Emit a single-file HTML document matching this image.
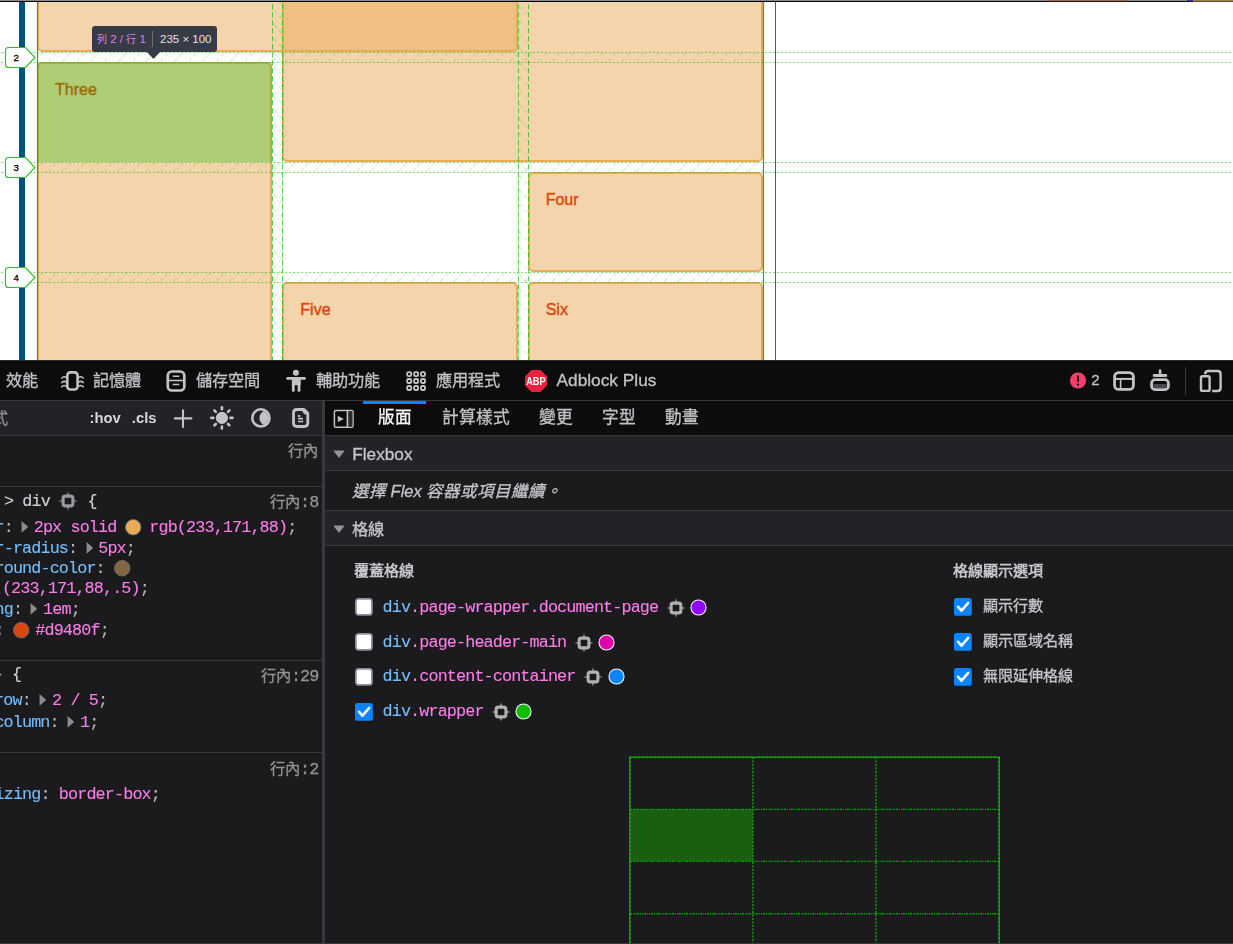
<!DOCTYPE html>
<html lang="zh-TW"><head><meta charset="utf-8">
<style>
*{box-sizing:border-box;margin:0;padding:0}
html,body{width:1233px;height:944px;overflow:hidden;background:#fff;font-family:"Liberation Sans",sans-serif}
.a{position:absolute}
#page{position:absolute;left:0;top:0;width:1233px;height:360px;background:#fff;overflow:hidden}
.box{position:absolute;background:rgba(233,171,88,.5);border:2px solid rgb(233,171,88);border-radius:5px;color:#d9480f;font-size:16px;padding:16px;line-height:20px;-webkit-text-stroke:0.45px currentColor}
.lbl{position:absolute;left:5px;width:30px;height:21px}
.lbl span{position:absolute;left:0;width:22px;top:3px;font-size:10.5px;text-align:center;color:#000;line-height:14px}
#dev{position:absolute;left:0;top:0;width:1233px;height:944px;will-change:transform}
.cjk{font-size:16px}
.mono{font-family:"Liberation Mono",monospace}
.t.mono{-webkit-text-stroke:0.1px currentColor}
.t{position:absolute;white-space:pre;line-height:20px;-webkit-text-stroke:0.3px currentColor}
</style></head><body>
<div id="page">
  <!-- blue bars -->
  <div class="a" style="left:19px;top:2px;width:6px;height:358px;background:#005282"></div>
  <div class="a" style="left:775px;top:2px;width:1px;height:358px;background:#0a70b8"></div>
  <!-- boxes -->
  <div class="box" style="left:37px;top:-48px;width:480.67px;height:100px"></div>
  <div class="box" style="left:282.33px;top:-48px;width:480.67px;height:210px"></div>
  <div class="box" style="left:37px;top:62px;width:235.33px;height:320px">Three</div>
  <div class="box" style="left:527.67px;top:172px;width:235.33px;height:100px">Four</div>
  <div class="box" style="left:282.33px;top:282px;width:235.34px;height:100px">Five</div>
  <div class="box" style="left:527.67px;top:282px;width:235.33px;height:100px">Six</div>
  <!-- highlighted cell -->
  <div class="a" style="left:37px;top:62px;width:235px;height:100px;background:rgba(18,188,0,.3)"></div>
  <!-- grid overlay svg -->
  <svg class="a" style="left:0;top:0" width="1233" height="360">
    <defs>
      <pattern id="hh" x="5.5" y="52" width="14" height="10" patternUnits="userSpaceOnUse">
        <path d="M0,10 L10,0" stroke="rgba(18,188,0,.2)" stroke-width="1.3" stroke-dasharray="5.5 2.5"/>
      </pattern>
      <pattern id="hv1" x="272.33" y="9.2" width="10" height="14.14" patternUnits="userSpaceOnUse">
        <path d="M0.5,0.5 L10,10" stroke="rgba(18,188,0,.2)" stroke-width="1.3" stroke-dasharray="6 2.5"/>
      </pattern>
      <pattern id="hv2" x="517.67" y="4.6" width="10" height="14.14" patternUnits="userSpaceOnUse">
        <path d="M0.5,0.5 L10,10" stroke="rgba(18,188,0,.2)" stroke-width="1.3" stroke-dasharray="6 2.5"/>
      </pattern>
    </defs>
    <rect x="37" y="52" width="726" height="10" fill="url(#hh)"/>
    <rect x="37" y="162" width="726" height="10" fill="url(#hh)"/>
    <rect x="37" y="272" width="726" height="10" fill="url(#hh)"/>
    <rect x="272.33" y="2" width="10" height="358" fill="url(#hv1)"/>
    <rect x="517.67" y="2" width="10" height="358" fill="url(#hv2)"/>
    <g stroke="rgba(18,188,0,.47)" stroke-width="1" stroke-dasharray="2.4 1.6" fill="none">
      <path d="M1,52.5H1233M1,62.5H1233M1,162.5H1233M1,172.5H1233M1,272.5H1233M1,282.5H1233"/>
    </g>
    <g stroke="rgba(18,188,0,.72)" stroke-width="1" stroke-dasharray="5 3" fill="none">
      <path d="M272.5,-3.7V360M282.5,-3.7V360M518.5,-3.7V360M528.5,-3.7V360"/>
    </g>
    <g stroke="#12bc00" stroke-width="1.2" fill="none">
      <path d="M37.5,2V360M763.5,2V360"/>
    </g>
    <!-- labels -->
    <g fill="#fff" stroke="#2fc22f" stroke-width="1.2">
      <path d="M8.5,47.5 H25.5 L35,57.5 L25.5,67.5 H8.5 Q5.5,67.5 5.5,64.5 V50.5 Q5.5,47.5 8.5,47.5Z"/>
      <path d="M8.5,157.5 H25.5 L35,167.5 L25.5,177.5 H8.5 Q5.5,177.5 5.5,174.5 V160.5 Q5.5,157.5 8.5,157.5Z"/>
      <path d="M8.5,267.5 H25.5 L35,277.5 L25.5,287.5 H8.5 Q5.5,287.5 5.5,284.5 V270.5 Q5.5,267.5 8.5,267.5Z"/>
    </g>
    <g font-family="Liberation Sans" font-size="9.6" fill="#000" stroke="#000" stroke-width="0.3" text-anchor="middle">
      <text x="16.2" y="60.7">2</text>
      <text x="16.2" y="170.7">3</text>
      <text x="16.2" y="280.7">4</text>
    </g>
  </svg>
  <!-- tooltip -->
  <div class="a" style="left:92px;top:26px;width:125px;height:26px;background:#363b45;border-radius:3px"></div>
  <svg class="a" style="left:146px;top:51px" width="15" height="10"><path d="M0,0 L15,0 L7.5,8Z" fill="#363b45"/></svg>
  <div class="a" style="left:97px;top:31px;font-size:11.5px;line-height:16px;color:#df80ee;white-space:pre"><span style="font-size:10px">列</span> 2 / <span style="font-size:10px">行</span> 1</div>
  <div class="a" style="left:152px;top:31px;width:1px;height:16px;background:#6a6f78"></div>
  <div class="a" style="left:160px;top:31px;font-size:11.5px;line-height:16px;color:#e4e4e8;white-space:pre">235 × 100</div>
  <!-- top strip -->
  <div class="a" style="left:0;top:0;width:1233px;height:1px;background:#8a8a8a"></div>
  <div class="a" style="left:0;top:1px;width:1233px;height:1px;background:#050505"></div>
  <div class="a" style="left:1047px;top:0;width:81px;height:1px;background:#8c7060"></div>
  <div class="a" style="left:1047px;top:1px;width:81px;height:1px;background:#3a0c08"></div>
  <div class="a" style="left:1187px;top:0;width:6px;height:1px;background:#3a3a90"></div>
  <div class="a" style="left:1187px;top:1px;width:6px;height:1px;background:#101060"></div>
  <div class="a" style="left:1193px;top:0;width:40px;height:1px;background:#9a8050"></div>
  <div class="a" style="left:1193px;top:1px;width:40px;height:1px;background:#6a5020"></div>
</div>

<div id="dev">
<div class="a" style="left:0px;top:360px;width:1233px;height:584px;background:#1b1b1e;"></div>
<div class="a" style="left:0px;top:360px;width:1233px;height:40px;background:#0c0c0d;"></div>
<div class="a" style="left:0px;top:400px;width:1233px;height:1px;background:#38383d;"></div>
<div class="a" style="left:0px;top:360px;width:1233px;height:1px;background:#2a2a2e;"></div>
<div class="t" style="left:5.5px;top:369.8px;font-size:16.2px;line-height:20.25px;color:#c2c2c6;">效能</div>
<div class="t" style="left:92.5px;top:369.8px;font-size:16.2px;line-height:20.25px;color:#c2c2c6;">記憶體</div>
<div class="t" style="left:195.5px;top:369.8px;font-size:16.2px;line-height:20.25px;color:#c2c2c6;">儲存空間</div>
<div class="t" style="left:315.5px;top:369.8px;font-size:16.2px;line-height:20.25px;color:#c2c2c6;">輔助功能</div>
<div class="t" style="left:435.5px;top:369.8px;font-size:16.2px;line-height:20.25px;color:#c2c2c6;">應用程式</div>
<div class="t" style="left:556.5px;top:370px;font-size:17.3px;line-height:21.62px;color:#c2c2c6;line-height:20px">Adblock Plus</div>
<div class="t" style="left:1091.3px;top:371.3px;font-size:15px;line-height:18.75px;color:#c2c2c6;">2</div>
<svg class="a" style="left:56px;top:366px" width="34" height="30" viewBox="0 0 34 30"><g fill="none" stroke="#c3c3c6" stroke-width="2.6" stroke-linecap="round"><rect x="11.3" y="6.4" width="10.3" height="17.1" rx="3"/></g><g fill="none" stroke="#c3c3c6" stroke-width="1.6" stroke-linecap="round"><path d="M9.8,11.2 Q7.5,10.0 5.8,12.0"/><path d="M23.2,11.2 Q25.5,10.0 27.2,12.0"/><path d="M9.8,15.8 Q7.5,14.600000000000001 5.8,16.6"/><path d="M23.2,15.8 Q25.5,14.600000000000001 27.2,16.6"/><path d="M9.8,20.0 Q7.5,18.8 5.8,20.8"/><path d="M23.2,20.0 Q25.5,18.8 27.2,20.8"/></g></svg>
<svg class="a" style="left:160px;top:366px" width="34" height="30" viewBox="0 0 34 30"><g fill="none" stroke="#c3c3c6"><rect x="7.8" y="5.5" width="16.5" height="19" rx="4" stroke-width="2.7"/><path d="M9,14.5H23" stroke-width="1.6"/><path d="M13.3,10.2H18.7M13.3,18.4H18.7" stroke-width="1.5" stroke-linecap="round"/></g></svg>
<svg class="a" style="left:280px;top:366px" width="34" height="30" viewBox="0 0 34 30"><g fill="#c3c3c6"><circle cx="15.9" cy="6.8" r="3"/><rect x="6.2" y="11" width="19.7" height="2.8" rx="1.4"/><rect x="11.8" y="12" width="8.9" height="7.2"/><rect x="11.9" y="17" width="2.8" height="9" rx="1.4"/><rect x="17.6" y="17" width="2.8" height="9" rx="1.4"/></g></svg>
<svg class="a" style="left:400px;top:366px" width="34" height="30" viewBox="0 0 34 30"><rect x="7.2" y="6.1" width="4" height="4" rx="1.3" fill="none" stroke="#c3c3c6" stroke-width="1.9"/><rect x="7.2" y="13.0" width="4" height="4" rx="1.3" fill="none" stroke="#c3c3c6" stroke-width="1.9"/><rect x="7.2" y="20.0" width="4" height="4" rx="1.3" fill="none" stroke="#c3c3c6" stroke-width="1.9"/><rect x="14.1" y="6.1" width="4" height="4" rx="1.3" fill="none" stroke="#c3c3c6" stroke-width="1.9"/><rect x="14.1" y="13.0" width="4" height="4" rx="1.3" fill="none" stroke="#c3c3c6" stroke-width="1.9"/><rect x="14.1" y="20.0" width="4" height="4" rx="1.3" fill="none" stroke="#c3c3c6" stroke-width="1.9"/><rect x="21.0" y="6.1" width="4" height="4" rx="1.3" fill="none" stroke="#c3c3c6" stroke-width="1.9"/><rect x="21.0" y="13.0" width="4" height="4" rx="1.3" fill="none" stroke="#c3c3c6" stroke-width="1.9"/><rect x="21.0" y="20.0" width="4" height="4" rx="1.3" fill="none" stroke="#c3c3c6" stroke-width="1.9"/></svg>
<svg class="a" style="left:519px;top:366px" width="34" height="30" viewBox="0 0 34 30"><path d="M12.5,4H21.5L28,10.5V19.5L21.5,26H12.5L6,19.5V10.5Z" fill="#e8213f"/><text x="7.2" y="18.9" font-family="Liberation Sans" font-weight="bold" font-size="10.4" fill="#fff" textLength="19.4" lengthAdjust="spacingAndGlyphs">ABP</text></svg>
<svg class="a" style="left:1064px;top:366px" width="34" height="30" viewBox="0 0 34 30"><circle cx="14" cy="14.5" r="8.1" fill="#f63d6b"/><rect x="13" y="9.2" width="2" height="6.7" rx="1" fill="#0c0c0d"/><circle cx="14" cy="18.6" r="1.1" fill="#0c0c0d"/></svg>
<svg class="a" style="left:1107px;top:364px" width="34" height="34" viewBox="0 0 34 34"><g fill="none" stroke="#c3c3c6"><rect x="7.6" y="8.6" width="18.8" height="16.8" rx="4" stroke-width="2.8"/><path d="M9,14.9H25" stroke-width="2"/><path d="M13.6,15V24" stroke-width="1.6"/></g></svg>
<svg class="a" style="left:1143px;top:364px" width="34" height="34" viewBox="0 0 34 34"><g fill="none" stroke="#c3c3c6" stroke-linecap="round"><path d="M17.1,6.6V10.5" stroke-width="2.6"/><path d="M11.2,11.5H22.8" stroke-width="2.8"/><rect x="8.6" y="15.6" width="16.8" height="10" rx="3.6" stroke-width="2.8"/></g><rect x="10.2" y="20" width="13.6" height="4" fill="#4a4a4f"/></svg>
<div class="a" style="left:1185px;top:367px;width:1px;height:28px;background:#3a3a3e;"></div>
<svg class="a" style="left:1194px;top:364px" width="34" height="34" viewBox="0 0 34 34"><g fill="none" stroke="#c3c3c6" stroke-width="2.4"><rect x="7" y="12.2" width="8.6" height="14.7" rx="1.4"/><path d="M11.2,10.2V10 Q11.2,7 14.2,7H23.6Q26.6,7 26.6,10V24Q26.6,27 23.6,27H18.2"/></g></svg>
<div class="a" style="left:0px;top:401px;width:322px;height:34px;background:#232327;"></div>
<div class="a" style="left:0px;top:435px;width:322px;height:1px;background:#38383d;"></div>
<div class="a" style="left:322px;top:401px;width:3px;height:543px;background:#38383d;"></div>
<div class="t" style="left:-8.5px;top:407.5px;font-size:16.2px;line-height:20.25px;color:#8f8f93;">式</div>
<div class="t" style="left:89.5px;top:408.8px;font-size:14.8px;line-height:18.5px;color:#d7d7db;font-weight:bold;-webkit-text-stroke:0">:hov</div>
<div class="t" style="left:131.8px;top:408.8px;font-size:14.8px;line-height:18.5px;color:#d7d7db;font-weight:bold;-webkit-text-stroke:0">.cls</div>
<svg class="a" style="left:160px;top:401px" width="40" height="34" viewBox="0 0 40 34"><path d="M23,9.2V26M14.8,17.4H31.4" stroke="#c3c3c6" stroke-width="2.1" stroke-linecap="round"/></svg>
<svg class="a" style="left:205px;top:401px" width="34" height="34" viewBox="0 0 34 34"><circle cx="16.9" cy="16.9" r="5.6" fill="#c3c3c6" stroke="#d8dde2" stroke-width="0.8"/><path d="M25.50,16.90L27.50,16.90" stroke="#c3c3c6" stroke-width="2.6" stroke-linecap="round"/><path d="M22.98,22.98L24.40,24.40" stroke="#c3c3c6" stroke-width="2.6" stroke-linecap="round"/><path d="M16.90,25.50L16.90,27.50" stroke="#c3c3c6" stroke-width="2.6" stroke-linecap="round"/><path d="M10.82,22.98L9.40,24.40" stroke="#c3c3c6" stroke-width="2.6" stroke-linecap="round"/><path d="M8.30,16.90L6.30,16.90" stroke="#c3c3c6" stroke-width="2.6" stroke-linecap="round"/><path d="M10.82,10.82L9.40,9.40" stroke="#c3c3c6" stroke-width="2.6" stroke-linecap="round"/><path d="M16.90,8.30L16.90,6.30" stroke="#c3c3c6" stroke-width="2.6" stroke-linecap="round"/><path d="M22.98,10.82L24.40,9.40" stroke="#c3c3c6" stroke-width="2.6" stroke-linecap="round"/></svg>
<svg class="a" style="left:244px;top:401px" width="34" height="34" viewBox="0 0 34 34"><defs><clipPath id="cc"><circle cx="23.2" cy="16.9" r="7.8"/></clipPath></defs><circle cx="16.9" cy="16.9" r="8.6" fill="none" stroke="#c3c3c6" stroke-width="2.6"/><circle cx="16.9" cy="16.9" r="7.4" fill="#c3c3c6" clip-path="url(#cc)"/></svg>
<svg class="a" style="left:283px;top:401px" width="34" height="34" viewBox="0 0 34 34"><g fill="none" stroke="#c3c3c6" stroke-width="2.8" stroke-linejoin="round"><path d="M14,8.5H21L24.8,12.3V22Q24.8,25.5 21.3,25.5H14Q10.5,25.5 10.5,22V12Q10.5,8.5 14,8.5Z"/></g><path d="M20,10L23.2,13.2" stroke="#c3c3c6" stroke-width="2"/><rect x="15" y="14" width="2.3" height="1.9" fill="#c3c3c6"/><path d="M15,17.6H20M15,20.5H20.2" stroke="#c3c3c6" stroke-width="1.6"/></svg>
<div class="a" style="left:325px;top:401px;width:908px;height:34px;background:#0c0c0d;"></div>
<div class="a" style="left:325px;top:435px;width:908px;height:1px;background:#38383d;"></div>
<div class="a" style="left:363px;top:401px;width:63px;height:3px;background:#0a84ff;"></div>
<svg class="a" style="left:327px;top:401px" width="34" height="34" viewBox="0 0 34 34"><rect x="7.4" y="9.5" width="18.6" height="16.7" rx="1.3" fill="none" stroke="#c3c3c6" stroke-width="1.5"/><rect x="21" y="10.2" width="4.3" height="15.3" fill="#2c2c30"/><path d="M20.4,10V26" stroke="#c3c3c6" stroke-width="1.6"/><path d="M10.8,14.8L16.8,18L10.8,21.1Z" fill="#c3c3c6"/></svg>
<div class="t" style="left:377.5px;top:407.5px;font-size:16.7px;line-height:20.88px;color:#fbfbfe;">版面</div>
<div class="t" style="left:441.5px;top:407.5px;font-size:16.7px;line-height:20.88px;color:#c2c2c6;">計算樣式</div>
<div class="t" style="left:538.5px;top:407.5px;font-size:16.7px;line-height:20.88px;color:#c2c2c6;">變更</div>
<div class="t" style="left:602px;top:407.5px;font-size:16.7px;line-height:20.88px;color:#c2c2c6;">字型</div>
<div class="t" style="left:665px;top:407.5px;font-size:16.7px;line-height:20.88px;color:#c2c2c6;">動畫</div>
<div class="t" style="right:914.7px;top:441.11px;font-size:15.3px;line-height:19.12px;color:#939395;text-align:right">行內</div>
<div class="a" style="left:0px;top:486px;width:322px;height:1px;background:#38383d;"></div>
<div class="t" style="right:914.5px;top:492.11px;font-size:15.3px;line-height:19.12px;color:#939395;text-align:right">行內<span class="mono" style="font-size:16.8px;letter-spacing:-0.880px">:8</span></div>
<div class="t mono" style="left:3.90px;top:490.90px;font-size:16.8px;line-height:21.00px;letter-spacing:-0.880px;"><span style="color:#d2d2d6">&gt; div</span></div>
<svg class="a" style="left:57.800000000000004px;top:490.8px" width="20" height="20" viewBox="0 0 20 20"><rect x="5.12" y="5.12" width="9.76" height="9.76" rx="2.2" fill="none" stroke="#9a9a9e" stroke-width="3.05"/><path d="M10,0.3L11.1,5H8.9ZM10,19.7L11.1,15H8.9ZM0.3,10L5,8.9V11.1ZM19.7,10L15,8.9V11.1Z" fill="#9a9a9e"/></svg>
<div class="t mono" style="left:87.40px;top:490.90px;font-size:16.8px;line-height:21.00px;letter-spacing:-0.880px;"><span style="color:#d2d2d6">{</span></div>
<div class="t mono" style="left:-5.50px;top:516.90px;font-size:16.8px;line-height:21.00px;letter-spacing:-0.880px;"><span style="color:#75bfff">r</span><span style="color:#b9b9bd">:</span></div>
<svg class="a" style="left:20px;top:519.5px" width="10" height="14" viewBox="0 0 10 14"><path d="M1.6,1.8 Q1,1 1.8,1.3 L7.6,6.2 Q8.2,6.8 7.6,7.4 L1.8,12.5 Q1,12.9 1.6,12 Z" fill="#8c8c90"/></svg>
<div class="t mono" style="left:33.70px;top:516.90px;font-size:16.8px;line-height:21.00px;letter-spacing:-0.880px;"><span style="color:#ff7de9">2px solid</span></div>
<svg class="a" style="left:124.25px;top:518.05px" width="18.5" height="18.5" viewBox="0 0 18.5 18.5"><circle cx="9.25" cy="9.25" r="7.75" fill="rgb(233,171,88)" stroke="#6b6b70" stroke-width="1"/></svg>
<div class="t mono" style="left:149.30px;top:516.90px;font-size:16.8px;line-height:21.00px;letter-spacing:-0.880px;"><span style="color:#ff7de9">rgb(233,171,88)</span><span style="color:#b9b9bd">;</span></div>
<div class="t mono" style="left:-5.50px;top:538.30px;font-size:16.8px;line-height:21.00px;letter-spacing:-0.880px;"><span style="color:#75bfff">r-radius</span><span style="color:#b9b9bd">:</span></div>
<svg class="a" style="left:85.3px;top:540.9px" width="10" height="14" viewBox="0 0 10 14"><path d="M1.6,1.8 Q1,1 1.8,1.3 L7.6,6.2 Q8.2,6.8 7.6,7.4 L1.8,12.5 Q1,12.9 1.6,12 Z" fill="#8c8c90"/></svg>
<div class="t mono" style="left:98.20px;top:538.30px;font-size:16.8px;line-height:21.00px;letter-spacing:-0.880px;"><span style="color:#ff7de9">5px</span><span style="color:#b9b9bd">;</span></div>
<div class="t mono" style="left:-5.50px;top:558.40px;font-size:16.8px;line-height:21.00px;letter-spacing:-0.880px;"><span style="color:#75bfff">round-color</span><span style="color:#b9b9bd">:</span></div>
<svg class="a" style="left:113.05px;top:559.25px" width="18.5" height="18.5" viewBox="0 0 18.5 18.5"><circle cx="9.25" cy="9.25" r="7.75" fill="#866640" stroke="#6b6b70" stroke-width="1"/></svg>
<div class="t mono" style="left:1.90px;top:578.40px;font-size:16.8px;line-height:21.00px;letter-spacing:-0.880px;"><span style="color:#ff7de9">(233,171,88,.5)</span><span style="color:#b9b9bd">;</span></div>
<div class="t mono" style="left:-5.50px;top:599.10px;font-size:16.8px;line-height:21.00px;letter-spacing:-0.880px;"><span style="color:#75bfff">ng</span><span style="color:#b9b9bd">:</span></div>
<svg class="a" style="left:28.7px;top:601.7px" width="10" height="14" viewBox="0 0 10 14"><path d="M1.6,1.8 Q1,1 1.8,1.3 L7.6,6.2 Q8.2,6.8 7.6,7.4 L1.8,12.5 Q1,12.9 1.6,12 Z" fill="#8c8c90"/></svg>
<div class="t mono" style="left:43.10px;top:599.10px;font-size:16.8px;line-height:21.00px;letter-spacing:-0.880px;"><span style="color:#ff7de9">1em</span><span style="color:#b9b9bd">;</span></div>
<div class="t mono" style="left:-5.50px;top:619.90px;font-size:16.8px;line-height:21.00px;letter-spacing:-0.880px;"><span style="color:#b9b9bd">:</span></div>
<svg class="a" style="left:11.649999999999999px;top:620.55px" width="18.5" height="18.5" viewBox="0 0 18.5 18.5"><circle cx="9.25" cy="9.25" r="7.75" fill="#d9480f" stroke="#6b6b70" stroke-width="1"/></svg>
<div class="t mono" style="left:35.30px;top:619.90px;font-size:16.8px;line-height:21.00px;letter-spacing:-0.880px;"><span style="color:#ff7de9">#d9480f</span><span style="color:#b9b9bd">;</span></div>
<div class="a" style="left:0px;top:660px;width:322px;height:1px;background:#38383d;"></div>
<div class="t" style="right:914.5px;top:666.01px;font-size:15.3px;line-height:19.12px;color:#939395;text-align:right">行內<span class="mono" style="font-size:16.8px;letter-spacing:-0.880px">:29</span></div>
<div class="t mono" style="left:-6.30px;top:663.80px;font-size:16.8px;line-height:21.00px;letter-spacing:-0.880px;"><span style="color:#d2d2d6">- {</span></div>
<div class="t mono" style="left:-5.90px;top:690.20px;font-size:16.8px;line-height:21.00px;letter-spacing:-0.880px;"><span style="color:#75bfff">row</span><span style="color:#b9b9bd">:</span></div>
<svg class="a" style="left:38.2px;top:692.8px" width="10" height="14" viewBox="0 0 10 14"><path d="M1.6,1.8 Q1,1 1.8,1.3 L7.6,6.2 Q8.2,6.8 7.6,7.4 L1.8,12.5 Q1,12.9 1.6,12 Z" fill="#8c8c90"/></svg>
<div class="t mono" style="left:52.00px;top:690.20px;font-size:16.8px;line-height:21.00px;letter-spacing:-0.880px;"><span style="color:#ff7de9">2 / 5</span><span style="color:#b9b9bd">;</span></div>
<div class="t mono" style="left:-5.60px;top:712.00px;font-size:16.8px;line-height:21.00px;letter-spacing:-0.880px;"><span style="color:#75bfff">column</span><span style="color:#b9b9bd">:</span></div>
<svg class="a" style="left:65.8px;top:714.6px" width="10" height="14" viewBox="0 0 10 14"><path d="M1.6,1.8 Q1,1 1.8,1.3 L7.6,6.2 Q8.2,6.8 7.6,7.4 L1.8,12.5 Q1,12.9 1.6,12 Z" fill="#8c8c90"/></svg>
<div class="t mono" style="left:80.00px;top:712.00px;font-size:16.8px;line-height:21.00px;letter-spacing:-0.880px;"><span style="color:#ff7de9">1</span><span style="color:#b9b9bd">;</span></div>
<div class="a" style="left:0px;top:752px;width:322px;height:1px;background:#38383d;"></div>
<div class="t" style="right:914.5px;top:758.81px;font-size:15.3px;line-height:19.12px;color:#939395;text-align:right">行內<span class="mono" style="font-size:16.8px;letter-spacing:-0.880px">:2</span></div>
<div class="t mono" style="left:-5.50px;top:783.60px;font-size:16.8px;line-height:21.00px;letter-spacing:-0.880px;"><span style="color:#75bfff">izing</span><span style="color:#b9b9bd">:</span> <span style="color:#ff7de9">border-box</span><span style="color:#b9b9bd">;</span></div>
<div class="a" style="left:325px;top:436px;width:908px;height:34px;background:#232327;"></div>
<div class="a" style="left:325px;top:470px;width:908px;height:1px;background:#38383d;"></div>
<div class="a" style="left:325px;top:510px;width:908px;height:1px;background:#38383d;"></div>
<div class="a" style="left:325px;top:511px;width:908px;height:34px;background:#232327;"></div>
<div class="a" style="left:325px;top:545px;width:908px;height:1px;background:#38383d;"></div>
<svg class="a" style="left:332.5px;top:448.8px" width="13" height="10" viewBox="0 0 13 10"><path d="M0.9,1.4H11.1Q11.9,1.4 11.4,2.1L6.6,8.2Q6,8.9 5.4,8.2L0.6,2.1Q0.1,1.4 0.9,1.4Z" fill="#939395"/></svg>
<svg class="a" style="left:332.5px;top:523.8px" width="13" height="10" viewBox="0 0 13 10"><path d="M0.9,1.4H11.1Q11.9,1.4 11.4,2.1L6.6,8.2Q6,8.9 5.4,8.2L0.6,2.1Q0.1,1.4 0.9,1.4Z" fill="#939395"/></svg>
<div class="t" style="left:352.3px;top:443.94px;font-size:17.2px;line-height:21.50px;color:#c6c6ca;">Flexbox</div>
<div class="t" style="left:352px;top:480.77px;font-size:16.5px;line-height:20.62px;color:#c6c6ca;font-style:italic">選擇 Flex 容器或項目繼續。</div>
<div class="t" style="left:352px;top:519.26px;font-size:16.2px;line-height:20.25px;color:#c6c6ca;">格線</div>
<div class="t" style="left:353.5px;top:562.34px;font-size:15.1px;line-height:18.88px;color:#c6c6ca;font-weight:bold;-webkit-text-stroke:0">覆蓋格線</div>
<div class="t" style="left:953px;top:562.14px;font-size:15.1px;line-height:18.88px;color:#c6c6ca;font-weight:bold;-webkit-text-stroke:0">格線顯示選項</div>
<div class="t" style="left:982.5px;top:597.14px;font-size:15.1px;line-height:18.88px;color:#c6c6ca;">顯示行數</div>
<div class="t" style="left:982.5px;top:632.14px;font-size:15.1px;line-height:18.88px;color:#c6c6ca;">顯示區域名稱</div>
<div class="t" style="left:982.5px;top:667.14px;font-size:15.1px;line-height:18.88px;color:#c6c6ca;">無限延伸格線</div>
<svg class="a" style="left:355.2px;top:597.9px" width="18" height="18" viewBox="0 0 18 18"><rect x="0.9" y="0.9" width="16" height="16" rx="2.6" fill="#fff" stroke="#8f8f9d" stroke-width="1.8"/></svg>
<svg class="a" style="left:355.2px;top:632.9px" width="18" height="18" viewBox="0 0 18 18"><rect x="0.9" y="0.9" width="16" height="16" rx="2.6" fill="#fff" stroke="#8f8f9d" stroke-width="1.8"/></svg>
<svg class="a" style="left:355.2px;top:667.9px" width="18" height="18" viewBox="0 0 18 18"><rect x="0.9" y="0.9" width="16" height="16" rx="2.6" fill="#fff" stroke="#8f8f9d" stroke-width="1.8"/></svg>
<svg class="a" style="left:355.2px;top:702.9px" width="18" height="18" viewBox="0 0 18 18"><rect x="0" y="0" width="17.8" height="17.8" rx="2.6" fill="#0a84ff"/><path d="M4.1,8.8L7.5,12.6L14.1,5" fill="none" stroke="#fff" stroke-width="2.6" stroke-linecap="round" stroke-linejoin="round"/></svg>
<svg class="a" style="left:954.1px;top:598px" width="18" height="18" viewBox="0 0 18 18"><rect x="0" y="0" width="17.8" height="17.8" rx="2.6" fill="#0a84ff"/><path d="M4.1,8.8L7.5,12.6L14.1,5" fill="none" stroke="#fff" stroke-width="2.6" stroke-linecap="round" stroke-linejoin="round"/></svg>
<svg class="a" style="left:954.1px;top:632.9px" width="18" height="18" viewBox="0 0 18 18"><rect x="0" y="0" width="17.8" height="17.8" rx="2.6" fill="#0a84ff"/><path d="M4.1,8.8L7.5,12.6L14.1,5" fill="none" stroke="#fff" stroke-width="2.6" stroke-linecap="round" stroke-linejoin="round"/></svg>
<svg class="a" style="left:954.1px;top:668px" width="18" height="18" viewBox="0 0 18 18"><rect x="0" y="0" width="17.8" height="17.8" rx="2.6" fill="#0a84ff"/><path d="M4.1,8.8L7.5,12.6L14.1,5" fill="none" stroke="#fff" stroke-width="2.6" stroke-linecap="round" stroke-linejoin="round"/></svg>
<div class="t mono" style="left:382.50px;top:596.70px;font-size:16.8px;line-height:21.00px;letter-spacing:-0.880px;"><span style="color:#75bfff">div</span><span style="color:#ff7de9">.page-wrapper.document-page</span></div>
<svg class="a" style="left:665.6999999999999px;top:597.5999999999999px" width="20" height="20" viewBox="0 0 20 20"><rect x="5.12" y="5.12" width="9.76" height="9.76" rx="2.2" fill="none" stroke="#b1b1b3" stroke-width="3.05"/><path d="M10,0.3L11.1,5H8.9ZM10,19.7L11.1,15H8.9ZM0.3,10L5,8.9V11.1ZM19.7,10L15,8.9V11.1Z" fill="#b1b1b3"/></svg>
<svg class="a" style="left:689.3px;top:597.8px" width="19" height="19" viewBox="0 0 19 19"><circle cx="9.5" cy="9.5" r="7.55" fill="#9400ff" stroke="#f4f4ff" stroke-width="1.1"/></svg>
<div class="t mono" style="left:382.50px;top:631.60px;font-size:16.8px;line-height:21.00px;letter-spacing:-0.880px;"><span style="color:#75bfff">div</span><span style="color:#ff7de9">.page-header-main</span></div>
<svg class="a" style="left:573.6999999999999px;top:632.5px" width="20" height="20" viewBox="0 0 20 20"><rect x="5.12" y="5.12" width="9.76" height="9.76" rx="2.2" fill="none" stroke="#b1b1b3" stroke-width="3.05"/><path d="M10,0.3L11.1,5H8.9ZM10,19.7L11.1,15H8.9ZM0.3,10L5,8.9V11.1ZM19.7,10L15,8.9V11.1Z" fill="#b1b1b3"/></svg>
<svg class="a" style="left:597.3px;top:632.7px" width="19" height="19" viewBox="0 0 19 19"><circle cx="9.5" cy="9.5" r="7.55" fill="#df00a9" stroke="#f4f4ff" stroke-width="1.1"/></svg>
<div class="t mono" style="left:382.50px;top:665.70px;font-size:16.8px;line-height:21.00px;letter-spacing:-0.880px;"><span style="color:#75bfff">div</span><span style="color:#ff7de9">.content-container</span></div>
<svg class="a" style="left:582.6999999999999px;top:666.5999999999999px" width="20" height="20" viewBox="0 0 20 20"><rect x="5.12" y="5.12" width="9.76" height="9.76" rx="2.2" fill="none" stroke="#b1b1b3" stroke-width="3.05"/><path d="M10,0.3L11.1,5H8.9ZM10,19.7L11.1,15H8.9ZM0.3,10L5,8.9V11.1ZM19.7,10L15,8.9V11.1Z" fill="#b1b1b3"/></svg>
<svg class="a" style="left:606.5px;top:666.8px" width="19" height="19" viewBox="0 0 19 19"><circle cx="9.5" cy="9.5" r="7.55" fill="#0a84ff" stroke="#f4f4ff" stroke-width="1.1"/></svg>
<div class="t mono" style="left:382.50px;top:700.80px;font-size:16.8px;line-height:21.00px;letter-spacing:-0.880px;"><span style="color:#75bfff">div</span><span style="color:#ff7de9">.wrapper</span></div>
<svg class="a" style="left:490.59999999999997px;top:701.6999999999999px" width="20" height="20" viewBox="0 0 20 20"><rect x="5.12" y="5.12" width="9.76" height="9.76" rx="2.2" fill="none" stroke="#b1b1b3" stroke-width="3.05"/><path d="M10,0.3L11.1,5H8.9ZM10,19.7L11.1,15H8.9ZM0.3,10L5,8.9V11.1ZM19.7,10L15,8.9V11.1Z" fill="#b1b1b3"/></svg>
<svg class="a" style="left:513.8px;top:701.9px" width="19" height="19" viewBox="0 0 19 19"><circle cx="9.5" cy="9.5" r="7.55" fill="#12bc00" stroke="#f4f4ff" stroke-width="1.1"/></svg>
<svg class="a" style="left:0px;top:0px" width="1233" height="944" viewBox="0 0 1233 944"><g fill="none" stroke="#12bc00" stroke-width="1.3"><rect x="630.2" y="809.3" width="122.7" height="52" fill="#1a5e10" stroke="none"/></g><g fill="none" stroke="#138a0c" stroke-width="1.6"><path d="M629.8,757.2H999.2M629.8,757.2V944M999.2,757.2V944"/></g><g fill="none" stroke="#17b50e" stroke-width="1.6" stroke-dasharray="1.8 2.2"><path d="M629.8,757.2H999.2M629.8,757.2V944M999.2,757.2V944"/></g><g fill="none" stroke="#129a0c" stroke-width="1.5" stroke-dasharray="2.1 1.4"><path d="M752.9,757V944M875.9,757V944"/></g><g fill="none" stroke="#14a80c" stroke-width="1.4" stroke-dasharray="2 1.2 1 1 1 0.8"><path d="M630,809.4H999M630,861.4H999M630,913.8H999"/></g></svg>
<div class="a" style="left:0px;top:943px;width:1233px;height:1px;background:#3a3a3e;"></div>
</div>
</body></html>
